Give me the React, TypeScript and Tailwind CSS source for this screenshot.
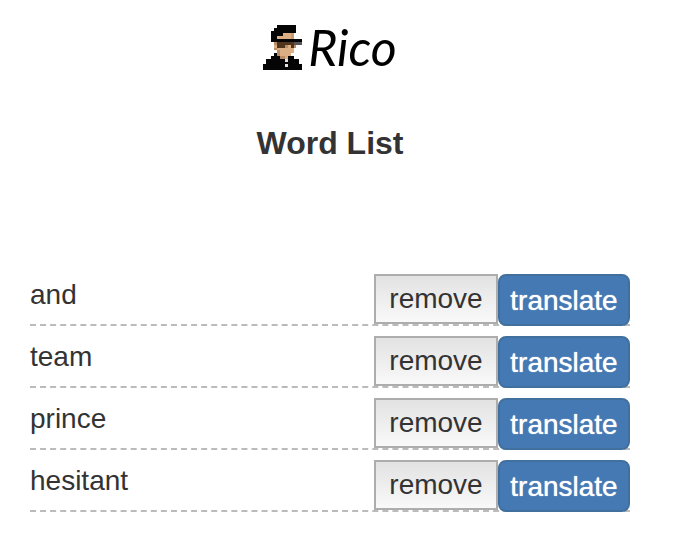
import React, { useState } from "react";

const initialWords = ["and", "team", "prince", "hesitant"];

// Pixel map of the avatar, one character per pixel
const sprite = [
  ".....kkkkkkk..",
  "....kkkkkkkk..",
  "...kkkkkkkkk..",
  "...kkkksssd...",
  "...kksssssd...",
  "...kkkkkkkkkkk",
  "....tbbbbbbggg",
  "....sbbbtsbt..",
  "....tssssss...",
  ".....tsssss...",
  "....ktssss....",
  "...kkkttskk...",
  ".kkkkkkkwkkkk.",
  ".kkkkkkkkkkkk.",
  "kkkkkkkkwkkkkk",
  "kkkkkkkkkkkkkk",
];

const spriteColors: Record<string, string> = {
  k: "#050505",
  s: "#dcae83",
  t: "#b98d66",
  d: "#c79b74",
  b: "#50351c",
  g: "#555555",
  w: "#e2e2e2",
};

const Avatar: React.FC = () => (
  <svg
    viewBox="0 0 14 16"
    preserveAspectRatio="none"
    shapeRendering="crispEdges"
    className="w-[39px] h-[45px]"
    aria-hidden="true"
  >
    {sprite.map((row, y) =>
      row.split("").map((c, x) =>
        c === "." ? null : (
          <rect key={`${x}-${y}`} x={x} y={y} width="1" height="1" fill={spriteColors[c]} />
        )
      )
    )}
  </svg>
);

type WordRowProps = {
  word: string;
  onRemove: () => void;
};

const WordRow: React.FC<WordRowProps> = ({ word, onRemove }) => (
  <li className="flex items-start h-[52px] border-b-2 border-dashed border-[#bbbbbb]">
    <span className="flex-1 leading-[42px]">{word}</span>
    <button
      type="button"
      onClick={onRemove}
      className="shrink-0 w-[124px] h-[50px] border-2 border-[#adadad] bg-linear-to-b from-[#e2e2e2] to-[#f9f9f9] leading-10"
    >
      remove
    </button>
    <button
      type="button"
      className="shrink-0 w-[132px] h-[52px] rounded-lg border-2 border-[#41709f] bg-[#4479b3] pt-0.5 leading-10 text-white [text-shadow:0_0_1px_#ffffff]"
    >
      translate
    </button>
  </li>
);

const App: React.FC = () => {
  const [words, setWords] = useState(initialWords);

  return (
    <main className="pt-6 pb-6 pl-[30px] pr-11 bg-white font-['Helvetica_Neue','Liberation_Sans',sans-serif] text-[28px] text-[#333333]">
      <header className="flex items-center justify-center gap-1.5">
        <Avatar />
        <span className="font-['Comic_Sans_MS',Lato,sans-serif] italic text-[50px] leading-[46px] text-black">
          Rico
        </span>
      </header>

      <h1 className="mt-[50px] text-center text-[32px] leading-[46px] font-bold">Word List</h1>

      <ul className="mt-[108px] flex flex-col gap-[10px]">
        {words.map((word) => (
          <WordRow
            key={word}
            word={word}
            onRemove={() => setWords(words.filter((w) => w !== word))}
          />
        ))}
      </ul>
    </main>
  );
};

export default App;
